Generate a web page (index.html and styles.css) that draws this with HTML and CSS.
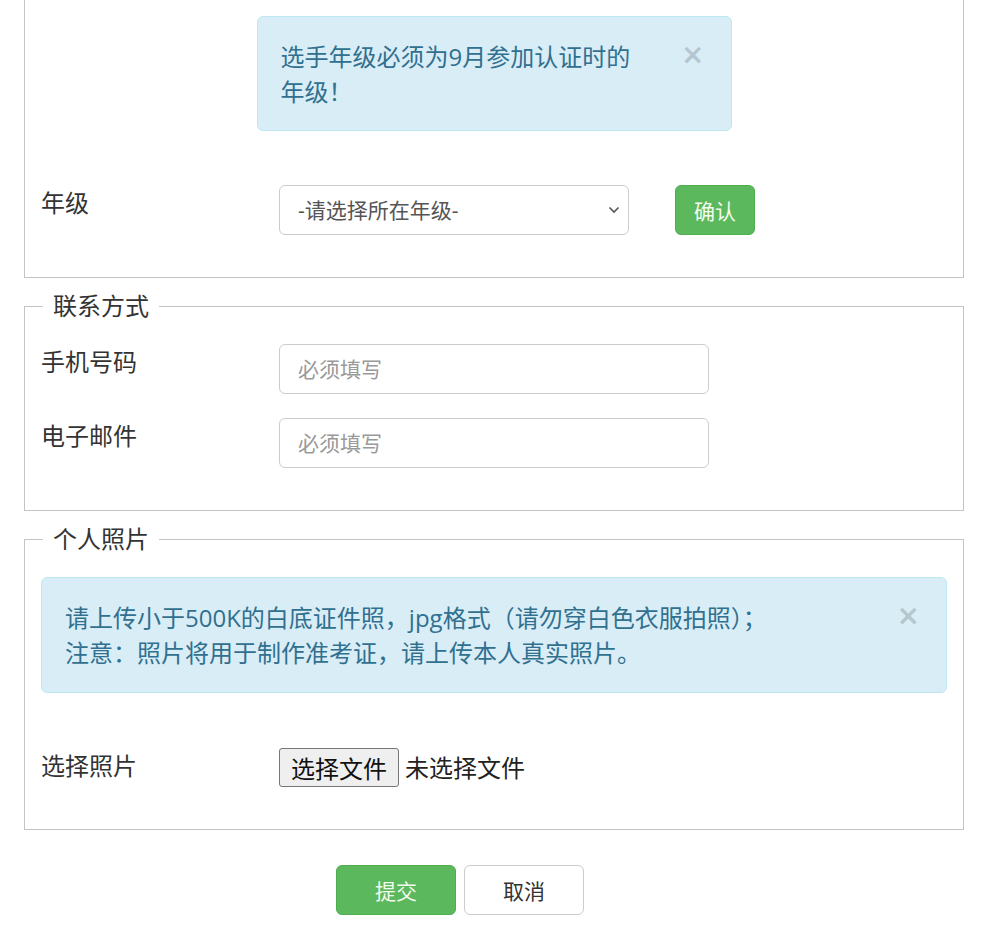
FILE: index.html
```html
<!DOCTYPE html>
<html lang="zh-CN">
<head>
<meta charset="utf-8">
<title>报名表</title>
<link rel="stylesheet" href="styles.css">
</head>
<body>
<form class="page">
  <fieldset class="group group-continued">
    <div class="alert alert-narrow">
      <span class="alert-text alert-text-wrap">选手年级必须为9月参加认证时的年级！</span>
      <button type="button" class="close">×</button>
    </div>
    <div class="row">
      <label class="row-label">年级</label>
      <div class="row-control">
        <div class="select-wrap">
          <select class="select">
            <option>-请选择所在年级-</option>
          </select>
          <svg class="chevron" width="12" height="8" viewBox="0 0 12 8"><path d="M1.5 1.5 L6 6 L10.5 1.5" fill="none" stroke="#555" stroke-width="1.6"/></svg>
        </div>
        <button type="button" class="btn btn-success btn-confirm">确认</button>
      </div>
    </div>
  </fieldset>

  <fieldset class="group">
    <legend class="legend">联系方式</legend>
    <div class="row">
      <label class="row-label">手机号码</label>
      <div class="row-control"><input class="input" type="text" placeholder="必须填写"></div>
    </div>
    <div class="row">
      <label class="row-label">电子邮件</label>
      <div class="row-control"><input class="input" type="text" placeholder="必须填写"></div>
    </div>
  </fieldset>

  <fieldset class="group">
    <legend class="legend">个人照片</legend>
    <div class="alert alert-wide">
      <span class="alert-text">请上传小于500K的白底证件照，jpg格式（请勿穿白色衣服拍照）；<br>注意：照片将用于制作准考证，请上传本人真实照片。</span>
      <button type="button" class="close">×</button>
    </div>
    <div class="row row-file">
      <label class="row-label">选择照片</label>
      <div class="row-control">
        <label class="file-btn">选择文件<input class="file-hidden" type="file"></label>
        <span class="file-name">未选择文件</span>
      </div>
    </div>
  </fieldset>

  <div class="actions">
    <button type="submit" class="btn btn-success btn-action">提交</button>
    <button type="button" class="btn btn-default btn-action">取消</button>
  </div>
</form>
</body>
</html>
```

FILE: styles.css
```css
* { box-sizing: border-box; }

html, body {
  margin: 0;
  padding: 0;
  background: #fff;
}

body {
  font-family: "Open Sans", "Noto Sans CJK SC", sans-serif;
  color: #333;
  font-size: 24px;
}

.page {
  padding: 0 0 30px 24px;
}

.group {
  width: 940px;
  margin: 11px 0 0 0;
  padding: 21px 16px 42px 16px;
  border: 1px solid #c4c4c4;
  min-width: 0;
}

.group-continued {
  margin-top: 0;
  border-top: 0;
  padding-top: 16px;
}

.legend {
  margin-left: 2px;
  padding: 0 10px;
  font-size: 24px;
  line-height: 34px;
  color: #333;
}

.alert {
  display: flex;
  align-items: flex-start;
  justify-content: space-between;
  background: #d9edf7;
  border: 1px solid #bce8f1;
  border-radius: 6px;
  color: #31708f;
  font-size: 24px;
  line-height: 35px;
  padding: 22px 26px 22px 23px;
}

.alert-narrow {
  width: 475px;
  height: 115px;
  margin: 0 auto 54px auto;
}

.alert-wide {
  width: 906px;
  height: 116px;
  margin: 0 0 55px 0;
}

.alert-text-wrap {
  max-width: 362px;
}

.close {
  border: 0;
  background: transparent;
  padding: 0;
  margin: 0;
  font-family: "DejaVu Sans", sans-serif;
  font-size: 28px;
  line-height: 31px;
  font-weight: bold;
  color: #000;
  opacity: 0.16;
  cursor: pointer;
}

.row {
  display: grid;
  grid-template-columns: 238px 1fr;
  margin-bottom: 24px;
}

.row:last-child { margin-bottom: 0; }

.row-label {
  font-size: 24px;
  line-height: 36px;
  color: #333;
}

.row-control {
  display: flex;
  align-items: center;
}

.select-wrap {
  position: relative;
  width: 350px;
  height: 50px;
}

.select {
  appearance: none;
  -webkit-appearance: none;
  width: 100%;
  height: 50px;
  border: 1px solid #ccc;
  border-radius: 6px;
  background: #fff;
  padding: 0 18px;
  font-family: "Open Sans", "Noto Sans CJK SC", sans-serif;
  font-size: 21px;
  color: #555;
}

.chevron {
  position: absolute;
  right: 9px;
  top: 21px;
  pointer-events: none;
}

.btn {
  height: 50px;
  border-radius: 6px;
  font-family: "Open Sans", "Noto Sans CJK SC", sans-serif;
  font-size: 21px;
  cursor: pointer;
  padding: 0;
}

.btn-success {
  background: #5cb85c;
  border: 1px solid #4cae4c;
  color: #f2fbef;
}

.btn-default {
  background: #fff;
  border: 1px solid #ccc;
  color: #333;
}

.btn-confirm {
  width: 80px;
  margin-left: 46px;
}

.input {
  width: 430px;
  height: 50px;
  border: 1px solid #ccc;
  border-radius: 6px;
  padding: 0 18px;
  font-family: "Open Sans", "Noto Sans CJK SC", sans-serif;
  font-size: 21px;
  color: #555;
}

.input::placeholder { color: #999; }

.row-file .row-control { align-items: flex-start; }

.file-btn {
  display: inline-flex;
  align-items: center;
  justify-content: center;
  width: 120px;
  height: 39px;
  background: #efefef;
  border: 1px solid #767676;
  border-radius: 3px;
  font-size: 24px;
  color: #111;
  cursor: pointer;
}

.file-hidden { display: none; }

.file-name {
  margin-left: 6px;
  font-size: 24px;
  line-height: 39px;
  color: #222;
}

.actions {
  display: flex;
  gap: 8px;
  margin-top: 35px;
  padding-left: 312px;
}

.btn-action { width: 120px; }
```
